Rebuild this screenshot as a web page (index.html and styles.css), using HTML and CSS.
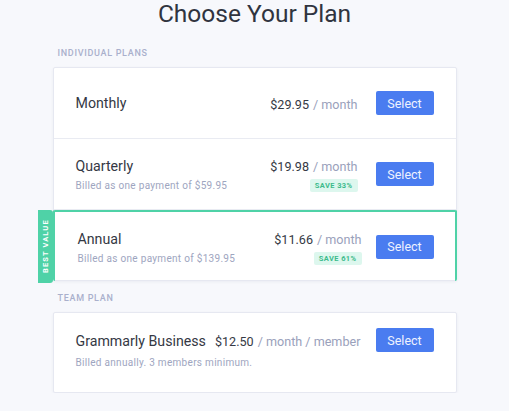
FILE: index.html
```html
<!DOCTYPE html>
<html lang="en">
<head>
    <meta charset="UTF-8">
    <meta name="viewport" content="width=device-width, initial-scale=1.0">
    <title>Choose Your Plan</title>
    <link rel="stylesheet" href="styles.css">
</head>
<body>
    <h1 class="page-title">Choose Your Plan</h1>
    <div class="plans">
        <div class="group-label">Individual Plans</div>
        <div class="plan-card">
            <div class="plan-row">
                <div class="plan-info">
                    <div class="plan-name">Monthly</div>
                </div>
                <div class="plan-price">
                    <div><span class="amount">$29.95</span> <span class="per">/ month</span></div>
                </div>
                <button class="select-btn">Select</button>
            </div>
            <div class="plan-row">
                <div class="plan-info">
                    <div class="plan-name">Quarterly</div>
                    <div class="plan-note">Billed as one payment of $59.95</div>
                </div>
                <div class="plan-price">
                    <div><span class="amount">$19.98</span> <span class="per">/ month</span></div>
                    <span class="save">SAVE 33%</span>
                </div>
                <button class="select-btn">Select</button>
            </div>
            <div class="plan-row best">
                <div class="best-tag">BEST VALUE</div>
                <div class="plan-info">
                    <div class="plan-name">Annual</div>
                    <div class="plan-note">Billed as one payment of $139.95</div>
                </div>
                <div class="plan-price">
                    <div><span class="amount">$11.66</span> <span class="per">/ month</span></div>
                    <span class="save">SAVE 61%</span>
                </div>
                <button class="select-btn">Select</button>
            </div>
        </div>

        <div class="group-label team-label">Team Plan</div>
        <div class="plan-card">
            <div class="plan-row team">
                <div class="plan-info">
                    <div class="team-line">
                        <span class="plan-name">Grammarly Business</span>
                        <span><span class="amount">$12.50</span> <span class="per">/ month / member</span></span>
                    </div>
                    <div class="plan-note">Billed annually. 3 members minimum.</div>
                </div>
                <button class="select-btn">Select</button>
            </div>
        </div>
    </div>
</body>
</html>
```

FILE: styles.css
```css
body {
    font-family: Roboto, "Noto Sans", sans-serif;
    margin: 0;
    background-color: #f7f8fc;
    color: #363a45;
}
.page-title {
    margin: 0;
    font-size: 24.5px;
    font-weight: 400;
    line-height: 28px;
    text-align: center;
    color: #30343f;
}
.plans {
    width: 404px;
    margin: 0 auto;
}
.group-label {
    padding: 20px 0 8px 5px;
    font-size: 9px;
    font-weight: 500;
    letter-spacing: 0.7px;
    text-transform: uppercase;
    color: #aab0cc;
    line-height: 11px;
}
.team-label {
    padding-top: 12px;
}
.plan-card {
    background-color: white;
    border: 1px solid #e6e8f1;
    border-radius: 2px;
    box-shadow: 0 1px 3px rgba(40, 50, 90, 0.06);
}
.plan-row {
    display: flex;
    align-items: center;
    padding: 0 22px;
    height: 70px;
    border-bottom: 1px solid #e9ebf2;
}
.plan-row:last-child {
    border-bottom: none;
}
.plan-info {
    flex: 1;
    min-width: 0;
    white-space: nowrap;
}
.plan-name {
    font-size: 14.2px;
    line-height: 18px;
    color: #343844;
}
.plan-note {
    margin-top: 5px;
    font-size: 10px;
    letter-spacing: 0.3px;
    color: #9ea5c0;
}
.plan-price {
    display: flex;
    flex-direction: column;
    align-items: flex-end;
    margin-right: 18px;
    white-space: nowrap;
}
.amount {
    font-size: 12.6px;
    color: #363a45;
}
.per {
    font-size: 12.6px;
    color: #9aa1bb;
}
.save {
    margin-top: 4px;
    padding: 2px 5px;
    border-radius: 2px;
    background-color: #ddf7ee;
    color: #3dbb8c;
    font-size: 7.5px;
    font-weight: 700;
    letter-spacing: 0.4px;
}
.select-btn {
    flex-shrink: 0;
    width: 58px;
    height: 24px;
    padding: 0;
    background-color: #4a7cf0;
    color: #eef2ff;
    border: none;
    border-radius: 2px;
    font-family: inherit;
    font-size: 12.5px;
    cursor: pointer;
}
.best {
    position: relative;
    height: 69px;
    margin: 0 -1px -1px -1px;
    border: 2px solid #4fd2a7;
    border-radius: 2px;
    padding: 0 21px 0 23px;
}
.best .plan-price {
    margin-right: 14px;
}
.best-tag {
    position: absolute;
    left: -17px;
    top: -2px;
    bottom: -2px;
    width: 15px;
    display: flex;
    align-items: center;
    justify-content: center;
    background-color: #4fd2a7;
    border-radius: 3px 0 0 3px;
    color: white;
    font-size: 7.5px;
    font-weight: 700;
    letter-spacing: 1.1px;
    writing-mode: vertical-rl;
    transform: rotate(180deg);
}
.team {
    align-items: flex-start;
    height: auto;
    padding-top: 15px;
    padding-bottom: 24px;
}
.team .plan-info {
    padding-top: 3px;
}
.team-line {
    display: flex;
    align-items: baseline;
    gap: 9px;
}
.team .plan-note {
    margin-top: 7px;
}
```
